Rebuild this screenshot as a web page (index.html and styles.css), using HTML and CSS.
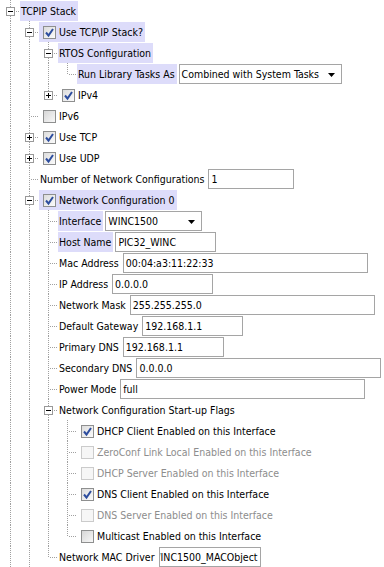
FILE: index.html
```html
<!DOCTYPE html>
<html lang="en">
<head>
    <meta charset="UTF-8">
    <title>TCPIP Stack</title>
    <link rel="stylesheet" href="styles.css">
</head>
<body>
    <div class="tree">
        <div class="row">
            <span class="g tee"><svg class="exp" width="9" height="9"><rect x=".5" y=".5" width="8" height="8"/><path d="M2 4.5h5"/></svg></span>
            <span class="item hl">TCPIP Stack</span>
        </div>
        <div class="row">
            <span class="g line"></span>
            <span class="g tee"><svg class="exp" width="9" height="9"><rect x=".5" y=".5" width="8" height="8"/><path d="M2 4.5h5"/></svg></span>
            <span class="item hl"><span class="cb on"><svg width="11" height="11"><path d="M2 5.5l2.5 3L9 2"/></svg></span>Use TCP\IP Stack?</span>
        </div>
        <div class="row">
            <span class="g line"></span>
            <span class="g line"></span>
            <span class="g tee"><svg class="exp" width="9" height="9"><rect x=".5" y=".5" width="8" height="8"/><path d="M2 4.5h5"/></svg></span>
            <span class="item hl">RTOS Configuration</span>
        </div>
        <div class="row">
            <span class="g line"></span>
            <span class="g line"></span>
            <span class="g line"></span>
            <span class="g end"></span>
            <span class="item hl">Run Library Tasks As</span>
            <span class="field combo w163">Combined with System Tasks<svg class="arrow" width="7" height="4"><path d="M0 0h7L3.5 4z"/></svg></span>
        </div>
        <div class="row">
            <span class="g line"></span>
            <span class="g line"></span>
            <span class="g end"><svg class="exp" width="9" height="9"><rect x=".5" y=".5" width="8" height="8"/><path d="M2 4.5h5M4.5 2v5"/></svg></span>
            <span class="item"><span class="cb on"><svg width="11" height="11"><path d="M2 5.5l2.5 3L9 2"/></svg></span>IPv4</span>
        </div>
        <div class="row">
            <span class="g line"></span>
            <span class="g tee"></span>
            <span class="item"><span class="cb"></span>IPv6</span>
        </div>
        <div class="row">
            <span class="g line"></span>
            <span class="g tee"><svg class="exp" width="9" height="9"><rect x=".5" y=".5" width="8" height="8"/><path d="M2 4.5h5M4.5 2v5"/></svg></span>
            <span class="item"><span class="cb on"><svg width="11" height="11"><path d="M2 5.5l2.5 3L9 2"/></svg></span>Use TCP</span>
        </div>
        <div class="row">
            <span class="g line"></span>
            <span class="g tee"><svg class="exp" width="9" height="9"><rect x=".5" y=".5" width="8" height="8"/><path d="M2 4.5h5M4.5 2v5"/></svg></span>
            <span class="item"><span class="cb on"><svg width="11" height="11"><path d="M2 5.5l2.5 3L9 2"/></svg></span>Use UDP</span>
        </div>
        <div class="row">
            <span class="g line"></span>
            <span class="g tee"></span>
            <span class="item">Number of Network Configurations</span>
            <span class="field w86">1</span>
        </div>
        <div class="row">
            <span class="g line"></span>
            <span class="g tee"><svg class="exp" width="9" height="9"><rect x=".5" y=".5" width="8" height="8"/><path d="M2 4.5h5"/></svg></span>
            <span class="item hl"><span class="cb on"><svg width="11" height="11"><path d="M2 5.5l2.5 3L9 2"/></svg></span>Network Configuration 0</span>
        </div>
        <div class="row">
            <span class="g line"></span>
            <span class="g line"></span>
            <span class="g tee"></span>
            <span class="item hl">Interface</span>
            <span class="field combo w97">WINC1500<svg class="arrow" width="7" height="4"><path d="M0 0h7L3.5 4z"/></svg></span>
        </div>
        <div class="row">
            <span class="g line"></span>
            <span class="g line"></span>
            <span class="g tee"></span>
            <span class="item hl">Host Name</span>
            <span class="field w101">PIC32_WINC</span>
        </div>
        <div class="row">
            <span class="g line"></span>
            <span class="g line"></span>
            <span class="g tee"></span>
            <span class="item">Mac Address</span>
            <span class="field w245">00:04:a3:11:22:33</span>
        </div>
        <div class="row">
            <span class="g line"></span>
            <span class="g line"></span>
            <span class="g tee"></span>
            <span class="item">IP Address</span>
            <span class="field w101">0.0.0.0</span>
        </div>
        <div class="row">
            <span class="g line"></span>
            <span class="g line"></span>
            <span class="g tee"></span>
            <span class="item">Network Mask</span>
            <span class="field w245">255.255.255.0</span>
        </div>
        <div class="row">
            <span class="g line"></span>
            <span class="g line"></span>
            <span class="g tee"></span>
            <span class="item">Default Gateway</span>
            <span class="field w101">192.168.1.1</span>
        </div>
        <div class="row">
            <span class="g line"></span>
            <span class="g line"></span>
            <span class="g tee"></span>
            <span class="item">Primary DNS</span>
            <span class="field w101">192.168.1.1</span>
        </div>
        <div class="row">
            <span class="g line"></span>
            <span class="g line"></span>
            <span class="g tee"></span>
            <span class="item">Secondary DNS</span>
            <span class="field w245">0.0.0.0</span>
        </div>
        <div class="row">
            <span class="g line"></span>
            <span class="g line"></span>
            <span class="g tee"></span>
            <span class="item">Power Mode</span>
            <span class="field w245">full</span>
        </div>
        <div class="row">
            <span class="g line"></span>
            <span class="g line"></span>
            <span class="g tee"><svg class="exp" width="9" height="9"><rect x=".5" y=".5" width="8" height="8"/><path d="M2 4.5h5"/></svg></span>
            <span class="item">Network Configuration Start-up Flags</span>
        </div>
        <div class="row">
            <span class="g line"></span>
            <span class="g line"></span>
            <span class="g line"></span>
            <span class="g tee"></span>
            <span class="item"><span class="cb on"><svg width="11" height="11"><path d="M2 5.5l2.5 3L9 2"/></svg></span>DHCP Client Enabled on this Interface</span>
        </div>
        <div class="row">
            <span class="g line"></span>
            <span class="g line"></span>
            <span class="g line"></span>
            <span class="g tee"></span>
            <span class="item off"><span class="cb"></span>ZeroConf Link Local Enabled on this Interface</span>
        </div>
        <div class="row">
            <span class="g line"></span>
            <span class="g line"></span>
            <span class="g line"></span>
            <span class="g tee"></span>
            <span class="item off"><span class="cb"></span>DHCP Server Enabled on this Interface</span>
        </div>
        <div class="row">
            <span class="g line"></span>
            <span class="g line"></span>
            <span class="g line"></span>
            <span class="g tee"></span>
            <span class="item"><span class="cb on"><svg width="11" height="11"><path d="M2 5.5l2.5 3L9 2"/></svg></span>DNS Client Enabled on this Interface</span>
        </div>
        <div class="row">
            <span class="g line"></span>
            <span class="g line"></span>
            <span class="g line"></span>
            <span class="g tee"></span>
            <span class="item off"><span class="cb"></span>DNS Server Enabled on this Interface</span>
        </div>
        <div class="row">
            <span class="g line"></span>
            <span class="g line"></span>
            <span class="g line"></span>
            <span class="g end"></span>
            <span class="item"><span class="cb"></span>Multicast Enabled on this Interface</span>
        </div>
        <div class="row">
            <span class="g line"></span>
            <span class="g line"></span>
            <span class="g end"></span>
            <span class="item">Network MAC Driver</span>
            <span class="field tail w102"><span>WINC1500_MACObject</span></span>
        </div>
    </div>
</body>
</html>
```

FILE: styles.css
```css
body {
    margin: 0;
    background: #fff;
    color: #000;
    font-family: "DejaVu Sans Condensed", "DejaVu Sans", sans-serif;
    font-size: 10.5px;
    overflow: hidden;
}

.tree {
    display: flex;
    flex-direction: column;
}

.row {
    display: flex;
    align-items: flex-start;
    height: 21px;
    padding-left: 1px;
}

/* guide cells: one per tree level, dotted lines drawn as backgrounds */
.g {
    flex: none;
    display: flex;
    width: 19px;
    height: 21px;
}

.g.line {
    background: repeating-linear-gradient(to bottom, #a0a0a0 0 1px, transparent 1px 2px) 9px 0 / 1px 100% no-repeat;
}

.g.tee {
    background:
        repeating-linear-gradient(to bottom, #a0a0a0 0 1px, transparent 1px 2px) 9px 0 / 1px 100% no-repeat,
        repeating-linear-gradient(to right, #a0a0a0 0 1px, transparent 1px 2px) 11px 11px / 8px 1px no-repeat;
}

.g.end {
    background:
        repeating-linear-gradient(to bottom, #a0a0a0 0 1px, transparent 1px 2px) 9px 0 / 1px 12px no-repeat,
        repeating-linear-gradient(to right, #a0a0a0 0 1px, transparent 1px 2px) 11px 11px / 8px 1px no-repeat;
}

.exp {
    margin: 7px 0 0 5px;
}

.exp rect {
    fill: #fff;
    stroke: #999;
}

.exp path {
    stroke: #000;
    fill: none;
}

/* node label, with optional checkbox */
.item {
    display: flex;
    align-items: center;
    height: 20px;
    margin-top: 1px;
    padding: 0 2px 0 1px;
    white-space: nowrap;
}

.item.hl {
    background: #dddcfa;
}

.item.off {
    color: #8d8d8d;
}

.cb {
    flex: none;
    display: flex;
    box-sizing: border-box;
    width: 13px;
    height: 13px;
    margin: 0 3px;
    border: 1px solid #8e8f8f;
    background: linear-gradient(135deg, #d6d6d6, #f7f7f7);
}

.cb.on {
    background: linear-gradient(135deg, #dcdcdc, #fbfbfb);
}

.off .cb {
    border-color: #cbcbcb;
    background: #f6f6f6;
}

.cb path {
    fill: none;
    stroke: #2d4d9e;
    stroke-width: 2;
}

/* text fields and combo boxes */
.field {
    flex: none;
    display: flex;
    align-items: center;
    box-sizing: border-box;
    height: 20px;
    margin: 1px 0 0 2px;
    padding: 0 2px;
    border: 1px solid #a5a5a5;
    background: #fff;
    white-space: nowrap;
    overflow: hidden;
}

.combo {
    justify-content: space-between;
}

.arrow {
    margin: 2px 4px 0 0;
}

.tail {
    justify-content: flex-end;
}

.w86 { width: 86px; }
.w97 { width: 97px; }
.w101 { width: 101px; }
.w102 { width: 102px; }
.w163 { width: 163px; }
.w245 { width: 245px; }
```
